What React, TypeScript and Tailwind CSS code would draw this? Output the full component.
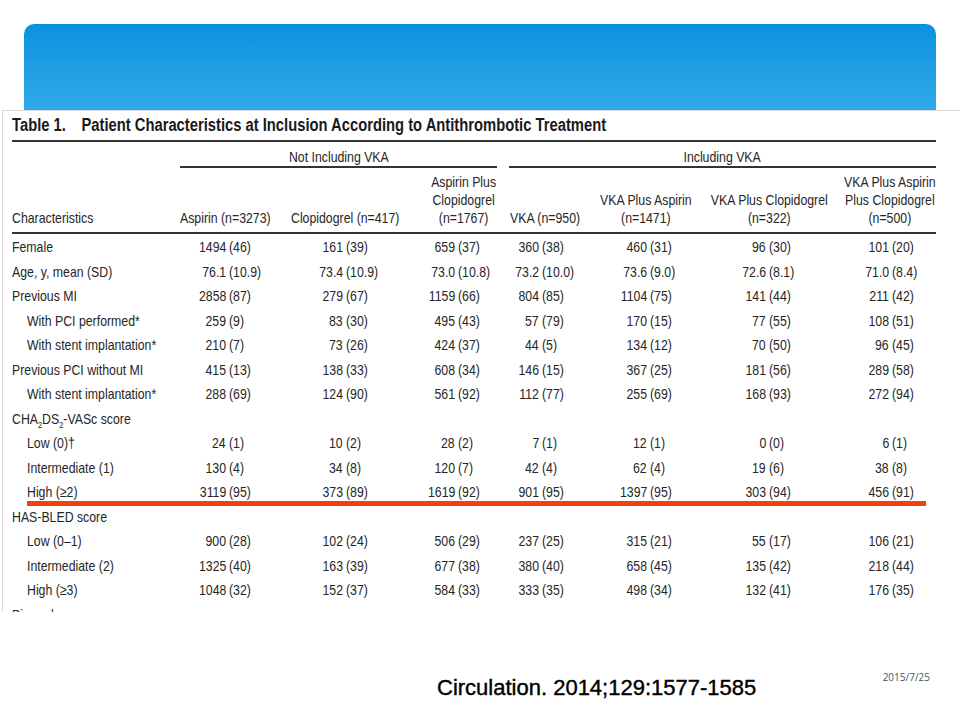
import React from 'react';

type Cell = [string, string];

interface Row {
  label: React.ReactNode;
  indent?: boolean;
  values?: Cell[];
}

// Narrow text: Arial metrics squeezed horizontally, like the condensed type of the journal table
const L: React.FC<{ children: React.ReactNode }> = ({ children }) => (
  <span className="inline-block scale-x-[0.82] origin-left">{children}</span>
);
const R: React.FC<{ children: React.ReactNode }> = ({ children }) => (
  <span className="inline-block scale-x-[0.82] origin-right">{children}</span>
);
const C: React.FC<{ children: React.ReactNode }> = ({ children }) => (
  <span className="inline-block shrink-0 scale-x-[0.82] origin-center text-center">{children}</span>
);

const rows: Row[] = [
  { label: 'Female', values: [['1494', '(46)'], ['161', '(39)'], ['659', '(37)'], ['360', '(38)'], ['460', '(31)'], ['96', '(30)'], ['101', '(20)']] },
  { label: 'Age, y, mean (SD)', values: [['76.1', '(10.9)'], ['73.4', '(10.9)'], ['73.0', '(10.8)'], ['73.2', '(10.0)'], ['73.6', '(9.0)'], ['72.6', '(8.1)'], ['71.0', '(8.4)']] },
  { label: 'Previous MI', values: [['2858', '(87)'], ['279', '(67)'], ['1159', '(66)'], ['804', '(85)'], ['1104', '(75)'], ['141', '(44)'], ['211', '(42)']] },
  { label: 'With PCI performed*', indent: true, values: [['259', '(9)'], ['83', '(30)'], ['495', '(43)'], ['57', '(79)'], ['170', '(15)'], ['77', '(55)'], ['108', '(51)']] },
  { label: 'With stent implantation*', indent: true, values: [['210', '(7)'], ['73', '(26)'], ['424', '(37)'], ['44', '(5)'], ['134', '(12)'], ['70', '(50)'], ['96', '(45)']] },
  { label: 'Previous PCI without MI', values: [['415', '(13)'], ['138', '(33)'], ['608', '(34)'], ['146', '(15)'], ['367', '(25)'], ['181', '(56)'], ['289', '(58)']] },
  { label: 'With stent implantation*', indent: true, values: [['288', '(69)'], ['124', '(90)'], ['561', '(92)'], ['112', '(77)'], ['255', '(69)'], ['168', '(93)'], ['272', '(94)']] },
  {
    label: (
      <>
        CHA<sub className="text-[9px] align-[-2px]">2</sub>DS<sub className="text-[9px] align-[-2px]">2</sub>-VASc score
      </>
    ),
  },
  { label: 'Low (0)†', indent: true, values: [['24', '(1)'], ['10', '(2)'], ['28', '(2)'], ['7', '(1)'], ['12', '(1)'], ['0', '(0)'], ['6', '(1)']] },
  { label: 'Intermediate (1)', indent: true, values: [['130', '(4)'], ['34', '(8)'], ['120', '(7)'], ['42', '(4)'], ['62', '(4)'], ['19', '(6)'], ['38', '(8)']] },
  { label: 'High (≥2)', indent: true, values: [['3119', '(95)'], ['373', '(89)'], ['1619', '(92)'], ['901', '(95)'], ['1397', '(95)'], ['303', '(94)'], ['456', '(91)']] },
  { label: 'HAS-BLED score' },
  { label: 'Low (0–1)', indent: true, values: [['900', '(28)'], ['102', '(24)'], ['506', '(29)'], ['237', '(25)'], ['315', '(21)'], ['55', '(17)'], ['106', '(21)']] },
  { label: 'Intermediate (2)', indent: true, values: [['1325', '(40)'], ['163', '(39)'], ['677', '(38)'], ['380', '(40)'], ['658', '(45)'], ['135', '(42)'], ['218', '(44)']] },
  { label: 'High (≥3)', indent: true, values: [['1048', '(32)'], ['152', '(37)'], ['584', '(33)'], ['333', '(35)'], ['498', '(34)'], ['132', '(41)'], ['176', '(35)']] },
  { label: 'Biomarkers' },
];

const DataRow: React.FC<{ row: Row }> = ({ row }) => (
  <div className="grid grid-cols-[168px_49px_61px_56px_64px_48px_42px_42px_58px_50px_65px_54px_71px_52px_44px] h-[24.5px] leading-[24.5px] whitespace-nowrap">
    <div className={row.indent ? 'pl-[15px]' : ''}>
      <L>{row.label}</L>
    </div>
    {row.values
      ? row.values.map(([n, p], i) => (
          <React.Fragment key={i}>
            <div className="text-right pr-[3px]">
              <R>{n}</R>
            </div>
            <div>
              <L>{p}</L>
            </div>
          </React.Fragment>
        ))
      : null}
  </div>
);

export default function App() {
  return (
    <div className="w-[960px] h-[720px] bg-white overflow-hidden relative">
      {/* Title banner */}
      <div className="mx-[24px] mt-[24px] h-[86px] rounded-t-[10px] bg-linear-to-b from-[#0891e0] to-[#2fa9e8]" />

      {/* Table picture */}
      <div className="relative ml-[2px] h-[502px] border-l border-t border-[#d9d9d9] pl-[9px] overflow-hidden text-[#262626] text-[15px] font-['Liberation_Sans',Arial,sans-serif]">
        <div className="w-[924px]">
          <div className="mt-[2px] h-[24px] leading-[24px] text-[18px] font-bold text-[#1a1a1a] whitespace-nowrap">
            <L>
              Table 1.<span className="ml-[19px]">Patient Characteristics at Inclusion According to Antithrombotic Treatment</span>
            </L>
          </div>
          <div className="mt-[3px] h-[2px] bg-[#333]" />

          {/* Group headings */}
          <div className="flex mt-[6px] whitespace-nowrap">
            <div className="w-[168px] shrink-0" />
            <div className="w-[317px] shrink-0 h-[20px] leading-[18px] flex justify-center border-b-2 border-[#333]">
              <C>Not Including VKA</C>
            </div>
            <div className="w-[12px] shrink-0" />
            <div className="w-[427px] shrink-0 h-[20px] leading-[18px] flex justify-center border-b-2 border-[#333]">
              <C>Including VKA</C>
            </div>
          </div>

          {/* Column headings */}
          <div className="flex items-end mt-[5px] h-[54px] leading-[18px] whitespace-nowrap">
            <div className="w-[168px] shrink-0">
              <L>Characteristics</L>
            </div>
            <div className="w-[111px] shrink-0">
              <L>Aspirin (n=3273)</L>
            </div>
            <div className="w-[139px] shrink-0">
              <L>Clopidogrel (n=417)</L>
            </div>
            <div className="w-[67px] shrink-0 flex justify-center">
              <C>
                Aspirin Plus
                <br />
                Clopidogrel
                <br />
                (n=1767)
              </C>
            </div>
            <div className="w-[99px] shrink-0 pl-[13px]">
              <L>VKA (n=950)</L>
            </div>
            <div className="w-[100px] shrink-0 flex justify-center">
              <C>
                VKA Plus Aspirin
                <br />
                (n=1471)
              </C>
            </div>
            <div className="w-[146px] shrink-0 flex justify-center">
              <C>
                VKA Plus Clopidogrel
                <br />
                (n=322)
              </C>
            </div>
            <div className="w-[3px] shrink-0" />
            <div className="w-[89px] shrink-0 flex justify-center">
              <C>
                VKA Plus Aspirin
                <br />
                Plus Clopidogrel
                <br />
                (n=500)
              </C>
            </div>
          </div>
          <div className="mt-[5px] h-[2px] bg-[#333]" />

          <div className="mt-[1px]">
            {rows.map((r, i) => (
              <DataRow key={i} row={r} />
            ))}
          </div>
        </div>

        {/* Red highlight mark */}
        <div className="absolute left-[24px] top-[390px] w-[899px] h-[5px] bg-[#f2400e]" />
      </div>

      {/* Footer */}
      <div className="flex items-start">
        <div className="ml-[437px] mt-[63px] text-[22px] leading-[26px] text-black font-['Liberation_Sans',Arial,sans-serif] whitespace-nowrap [-webkit-text-stroke:0.4px_black]">
          Circulation. 2014;129:1577-1585
        </div>
        <div className="ml-auto mr-[30px] mt-[59px] text-[10px] leading-[12px] text-[#44546a] font-['Open_Sans',sans-serif]">
          2015/7/25
        </div>
      </div>
    </div>
  );
}
